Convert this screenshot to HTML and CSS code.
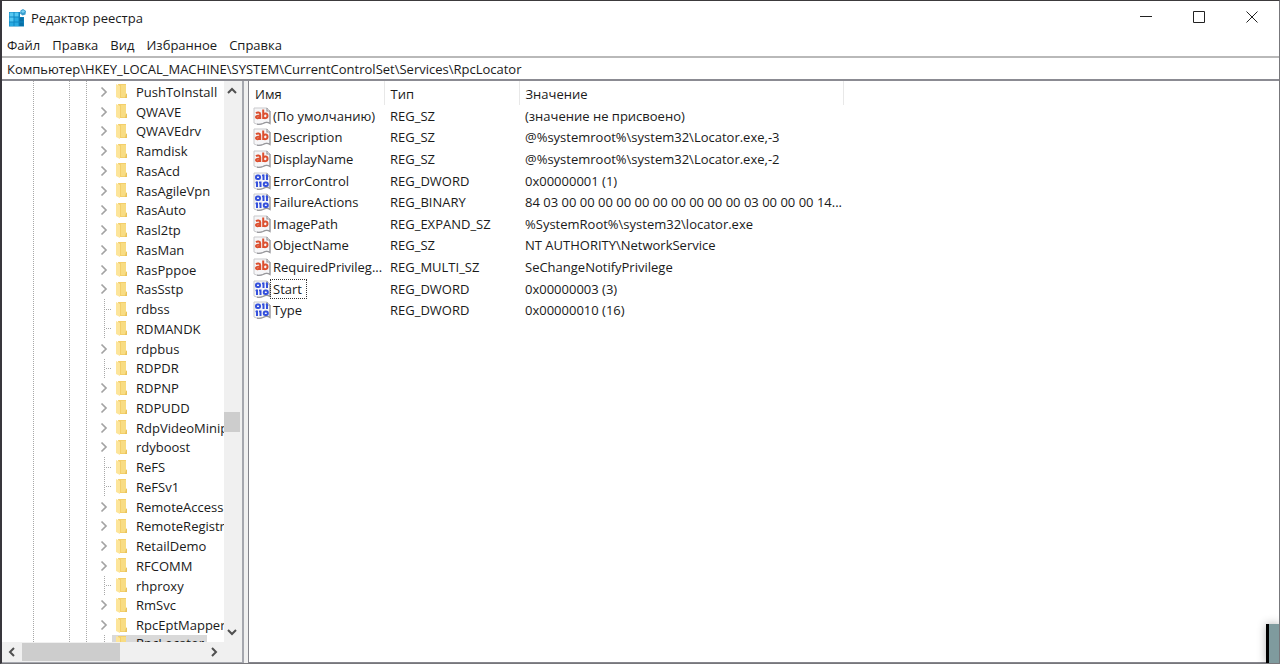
FILE: index.html
```
<!DOCTYPE html>
<html lang="ru">
<head>
<meta charset="utf-8">
<title>Редактор реестра</title>
<link rel="stylesheet" href="styles.css">
</head>
<body>
<svg class="defs" aria-hidden="true">
  <symbol id="folder" viewBox="0 0 12 15">
    <path d="M2 0h8v14H4z" fill="#f3cf6b"/>
    <path d="M5 1h5v8l1 1v3H5z" fill="#f8dc83"/>
    <path d="M10 10h1v4h-2z" fill="#e9c35c"/>
    <path d="M0 0l4 2v13l-4-2z" fill="#fde59a"/>
  </symbol>
  <symbol id="chev" viewBox="0 0 8 12">
    <path d="M1.500 1.500L6 6l-4.500 4.500" fill="none" stroke="#a3a3a3" stroke-width="1.700"/>
  </symbol>
  <symbol id="page" viewBox="0 0 18 18">
    <path d="M1 1h13l3 3v12.500c-2-1.500-4-1.800-7 0-3 1.300-6 1-9-.5z" fill="#f6f6f8" stroke="#c9c9cc"/>
    <path d="M14 1v3h3M17 4v12.500c-2-1.500-4-1.800-7 0-2 .8-4 1-6 .6" fill="none" stroke="#98989c" stroke-width="1.200"/>
  </symbol>
  <symbol id="str" viewBox="0 0 18 18">
    <use href="#page"/>
    <g fill="none" stroke="#dc5030" stroke-width="2">
      <path d="M3 6.200c1.200-.9 4.200-1 4.200 1V12M7.200 8.500c-2.200 0-4.200.2-4.200 1.500 0 1.700 3 1.400 4.200-.2"/>
      <path d="M10.200 2.500V12M10.200 8c.8-2 4.300-2 4.300 .8s-3.500 3-4.300 1.200"/>
    </g>
  </symbol>
  <symbol id="bin" viewBox="0 0 18 18">
    <use href="#page"/>
    <g fill="none" stroke="#3450dc" stroke-width="2">
      <rect x="3" y="3.500" width="4" height="3.500" rx="1.500"/>
      <path d="M10.500 2.500V8M14 2.500V8M4 9.500V15M7.500 9.500V15"/>
      <path d="M9 3.500h2M12.800 3.500h1M2.500 10.500h1.500M6 10.500h1" stroke-width="1.500"/>
      <rect x="10.800" y="10.500" width="4" height="3.500" rx="1.500"/>
    </g>
  </symbol>
</svg>
<div class="window">
  <header class="titlebar">
    <svg class="app-icon" viewBox="0 0 18 18" aria-hidden="true">
      <path d="M1 3h11v5h4v9.500H1z" fill="#0f86c2"/>
      <path d="M1.500 3.500h4v4h-4zM6.500 3.500h4v4h-4zM1.500 8.500h4v4h-4z" fill="#55c8f2"/>
      <path d="M6.500 8.500h4v4h-4zM1.500 13.500h4V17h-4zM6.500 13.500h4V17h-4z" fill="#2aabe2"/>
      <path d="M11.500 8.500h4v4h-4zM11.500 13.500h4V17h-4z" fill="#0870a6"/>
      <path d="M15 0l3 2-.5 3.500-3 1-2.500-2 .5-3z" fill="#3a9fd0"/>
      <path d="M15 1l2 1.500-2 1.500-2-1.200z" fill="#7bd2f3"/>
    </svg>
    <h1 class="title">Редактор реестра</h1>
    <div class="caption">
      <button class="cap" aria-label="Свернуть"><svg viewBox="0 0 12 12"><path d="M0 5.500h12" /></svg></button>
      <button class="cap" aria-label="Развернуть"><svg viewBox="0 0 12 12"><path d="M.5.500h11v11H.5z"/></svg></button>
      <button class="cap" aria-label="Закрыть"><svg viewBox="0 0 12 12"><path d="M.5.500l11 11M11.500.500l-11 11"/></svg></button>
    </div>
  </header>
  <nav class="menu">
    <button>Файл</button><button>Правка</button><button>Вид</button><button>Избранное</button><button>Справка</button>
  </nav>
  <input class="address" type="text" aria-label="Адрес" value="Компьютер\HKEY_LOCAL_MACHINE\SYSTEM\CurrentControlSet\Services\RpcLocator">
  <main class="panes">
    <section class="tree-pane">
      <ul class="tree" id="tree"></ul>
      <div class="vbar">
        <button class="arrow" aria-label="Вверх"><svg viewBox="0 0 10 10"><path d="M1 7l4-4 4 4"/></svg></button>
        <div class="vtrack"><div class="vthumb"></div></div>
        <button class="arrow" aria-label="Вниз"><svg viewBox="0 0 10 10"><path d="M1 3l4 4 4-4"/></svg></button>
      </div>
      <div class="hbar">
        <button class="arrow" aria-label="Влево"><svg viewBox="0 0 10 10"><path d="M7 1L3 5l4 4"/></svg></button>
        <div class="htrack"><div class="hthumb"></div></div>
        <button class="arrow" aria-label="Вправо"><svg viewBox="0 0 10 10"><path d="M3 1l4 4-4 4"/></svg></button>
      </div>
    </section>
    <section class="list-pane">
      <table class="values">
        <colgroup><col class="c-name"><col class="c-type"><col class="c-value"></colgroup>
        <thead><tr><th>Имя</th><th>Тип</th><th>Значение</th></tr></thead>
        <tbody id="values"></tbody>
      </table>
    </section>
  </main>
  <div class="corner"></div>
</div>
<script src="app.js"></script>
</body>
</html>
```

FILE: styles.css
```
* { box-sizing: border-box; }
body {
  margin: 0;
  color: #1a1a1a;
  background: #fff;
  font-family: "Open Sans", "Noto Sans", sans-serif;
  font-size: 13px;
  line-height: 18px;
}
button {
  margin: 0;
  padding: 0;
  border: 0;
  background: none;
  color: inherit;
  font: inherit;
}
.defs { position: absolute; width: 0; height: 0; }
.window {
  position: relative;
  display: flex;
  flex-direction: column;
  height: 100vh;
  overflow: hidden;
  border: 1px solid #77777b;
  border-top-color: #3c3a3c;
  border-left: 2px solid #38363c;
}
.titlebar {
  display: flex;
  align-items: center;
  height: 33px;
  padding: 0 1px 0 6px;
}
.app-icon { width: 18px; height: 18px; margin-right: 5px; }
.title { flex: 1; margin: 0; font-size: 13px; font-weight: 400; }
.caption { display: flex; height: 32px; align-self: start; }
.cap { display: grid; place-items: center; width: 53px; }
.cap svg { width: 12px; height: 12px; fill: none; stroke: #222; }
.menu {
  display: flex;
  gap: 12px;
  height: 22px;
  padding-left: 5px;
}
.address {
  height: 25px;
  margin: 0;
  padding: 0 5px;
  border: 0;
  border-top: 2px solid #b9b9b9;
  border-bottom: 2px solid #8b8b92;
  background: #fff;
  color: inherit;
  font: inherit;
  outline: 0;
}
.panes {
  display: flex;
  gap: 4px;
  flex: 1;
  min-height: 0;
  background: #f0f0f0;
}
.tree-pane {
  display: grid;
  grid-template: 1fr 20px / 1fr 18px;
  width: 242px;
  border-right: 2px solid #a5a7ae;
  border-bottom: 1px solid #a5a7ae;
  background: #fff;
}
.tree {
  display: grid;
  grid-template-rows: repeat(28, 1fr) 7px;
  min-width: 0;
  min-height: 0;
  margin: 0;
  padding: 1px 0 0;
  overflow: hidden;
  list-style: none;
  background:
    repeating-linear-gradient(#a8a8a8 0 1px, #fff 1px 2px) 31px 0 / 1px 100% no-repeat,
    repeating-linear-gradient(#a8a8a8 0 1px, #fff 1px 2px) 67px 0 / 1px 100% no-repeat,
    repeating-linear-gradient(#a8a8a8 0 1px, #fff 1px 2px) 84px 0 / 1px 100% no-repeat;
}
.node {
  display: flex;
  align-items: center;
  min-height: 0;
  padding-left: 98px;
  white-space: nowrap;
}
.node .chev { flex: none; width: 8px; height: 12px; margin-right: 4px; }
.node .line {
  flex: none;
  align-self: stretch;
  width: 8px;
  margin-left: 4px;
  background:
    repeating-linear-gradient(#a8a8a8 0 1px, #fff 1px 2px) 0 0 / 1px 100% no-repeat,
    repeating-linear-gradient(90deg, #a8a8a8 0 1px, #fff 1px 2px) 0 50% / 8px 1px no-repeat;
}
.node .folder { flex: none; width: 12px; height: 15px; }
.label { display: flex; align-items: center; padding-left: 4px; }
.name { padding: 0 3px 0 8px; }
.node.selected { align-items: start; overflow: hidden; }
.node.selected .line { background-size: 1px 100%, 0 0; }
.selected .label { background: #d9d9d9; line-height: 16px; }
.arrow { display: grid; place-items: center; }
.arrow svg { width: 10px; height: 10px; fill: none; stroke: #505050; stroke-width: 2; }
.vbar {
  display: grid;
  grid-template-rows: 20px 1fr 20px;
  padding-right: 2px;
  background: #f0f0f0;
}
.vtrack { display: grid; grid-template-rows: 311fr 20px 190fr; }
.vthumb { grid-row: 2; background: #cdcdcd; }
.hbar {
  grid-column: 1 / 3;
  display: grid;
  grid-template-columns: 20px 1fr 20px 18px;
  background: #f0f0f0;
}
.htrack { display: grid; grid-template-columns: 98fr 84fr; }
.hthumb { margin: 1px 0; background: #cdcdcd; }
.list-pane {
  flex: 1;
  min-width: 0;
  border-left: 1px solid #85858c;
  border-bottom: 1px solid #85858c;
  background: #fff;
}
.values {
  width: 594px;
  height: 240px;
  border-collapse: collapse;
  table-layout: fixed;
}
.c-name { width: 135px; }
.c-type { width: 135px; }
.c-value { width: 324px; }
.values thead tr { height: 24px; }
.values th {
  padding: 2px 6px 0;
  border-right: 1px solid #e8e8e8;
  font-weight: 400;
  text-align: left;
}
.values td {
  padding: 0 0 0 6px;
  white-space: nowrap;
}
.values td:first-child { padding-left: 4px; }
.cell { display: flex; align-items: center; }
.cell svg { flex: none; width: 18px; height: 18px; }
.cell span { padding: 0 2px; }
.cell .focus { padding-right: 4px; outline: 1px dotted #333; }
.corner {
  position: absolute;
  right: -1px;
  bottom: -1px;
  width: 14px;
  height: 40px;
  border-left: 3px solid #000;
  background: #7f9b9e;
  box-shadow: 0 0 10px rgba(0, 0, 0, .3);
}
```

FILE: app.js
```
const keys = [
  ['PushToInstall', 1], ['QWAVE', 1], ['QWAVEdrv', 1], ['Ramdisk', 1], ['RasAcd', 1],
  ['RasAgileVpn', 1], ['RasAuto', 1], ['Rasl2tp', 1], ['RasMan', 1], ['RasPppoe', 1],
  ['RasSstp', 1], ['rdbss', 0], ['RDMANDK', 0], ['rdpbus', 1], ['RDPDR', 0],
  ['RDPNP', 1], ['RDPUDD', 1], ['RdpVideoMiniport', 1], ['rdyboost', 1], ['ReFS', 0],
  ['ReFSv1', 0], ['RemoteAccess', 1], ['RemoteRegistry', 1], ['RetailDemo', 1],
  ['RFCOMM', 1], ['rhproxy', 0], ['RmSvc', 1], ['RpcEptMapper', 1], ['RpcLocator', 0]
];
document.getElementById('tree').innerHTML = keys.map(([name, open], i) => {
  const lead = open
    ? '<svg class="chev"><use href="#chev"/></svg>'
    : '<span class="line"></span>';
  const cls = i === keys.length - 1 ? 'node selected' : 'node';
  return `<li class="${cls}">${lead}<span class="label"><svg class="folder"><use href="#folder"/></svg><span class="name">${name}</span></span></li>`;
}).join('');

const values = [
  ['str', '(По умолчанию)', 'REG_SZ', '(значение не присвоено)'],
  ['str', 'Description', 'REG_SZ', '@%systemroot%\\system32\\Locator.exe,-3'],
  ['str', 'DisplayName', 'REG_SZ', '@%systemroot%\\system32\\Locator.exe,-2'],
  ['bin', 'ErrorControl', 'REG_DWORD', '0x00000001 (1)'],
  ['bin', 'FailureActions', 'REG_BINARY', '84 03 00 00 00 00 00 00 00 00 00 00 03 00 00 00 14...'],
  ['str', 'ImagePath', 'REG_EXPAND_SZ', '%SystemRoot%\\system32\\locator.exe'],
  ['str', 'ObjectName', 'REG_SZ', 'NT AUTHORITY\\NetworkService'],
  ['str', 'RequiredPrivileg...', 'REG_MULTI_SZ', 'SeChangeNotifyPrivilege'],
  ['bin', 'Start', 'REG_DWORD', '0x00000003 (3)'],
  ['bin', 'Type', 'REG_DWORD', '0x00000010 (16)']
];
document.getElementById('values').innerHTML = values.map(([icon, name, type, value]) =>
  `<tr><td><div class="cell"><svg><use href="#${icon}"/></svg><span class="${name === 'Start' ? 'focus' : ''}">${name}</span></div></td><td>${type}</td><td>${value}</td></tr>`
).join('');
```
